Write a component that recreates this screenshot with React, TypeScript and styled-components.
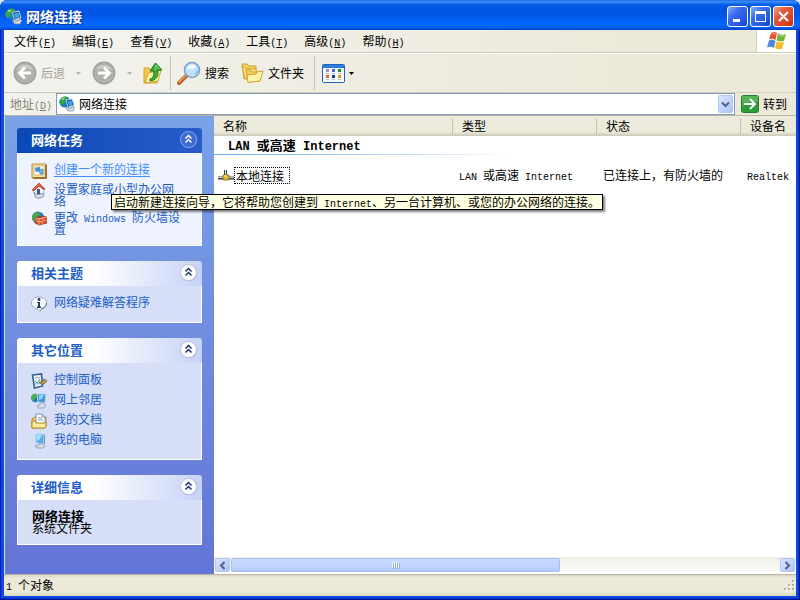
import React, { ReactNode } from "react";
import styled, { createGlobalStyle, css } from "styled-components";

const cjk = '"Noto Sans CJK SC", "Liberation Sans", sans-serif';

const GlobalStyle = createGlobalStyle`
  * { box-sizing: border-box; }
  html, body { margin: 0; background: #d5e3f5; }
  body, button, input { font: 12px/16px ${cjk}; color: #000; }
  button { padding: 0; border: 0; background: none; white-space: nowrap; }
  svg { display: block; flex: none; }
  ul { list-style: none; margin: 0; padding: 0; }
`;

const Latin = styled.span<{ $large?: boolean }>`
  font-family: "Liberation Mono", monospace;
  font-size: ${(p) => (p.$large ? 12 : 10)}px;
  line-height: 0;
  white-space: pre;
`;

/* ---------- window frame ---------- */

const Frame = styled.div`
  min-height: 100vh;
  display: flex;
  flex-direction: column;
  padding: 0 4px 4px;
  border-radius: 8px 8px 0 0;
  background: #0a4be0;
  box-shadow: inset 1px 0 #0019b8, inset -1px 0 #00138c, inset 0 -1px #00138c, inset -2px -2px #0431cb;
  overflow: hidden;
`;

const TitleBar = styled.header`
  display: flex;
  align-items: center;
  height: 30px;
  margin: 0 -4px;
  padding: 2px 6px 0 5px;
  background: linear-gradient(
    #0a5ae0 0, #3c8cf8 1px, #2a80f5 3px, #0660ea 4px, #0054e3 8px,
    #0055e6 15px, #0262f8 20px, #0468ff 26px, #005bea 28px, #003fc4 30px
  );
`;

const Title = styled.h1`
  flex: 1;
  margin: 0 0 0 4px;
  font-size: 14px;
  line-height: 20px;
  font-weight: 700;
  color: #fff;
  text-shadow: 1px 1px 1px #0a2a80;
`;

const Controls = styled.div`
  display: flex;
  gap: 2px;
`;

const ControlButton = styled.button<{ $close?: boolean }>`
  width: 21px;
  height: 21px;
  border: 1px solid #fff;
  border-radius: 3px;
  display: grid;
  place-items: center;
  background: ${(p) =>
    p.$close
      ? "linear-gradient(135deg, #f0a088, #e3593a 35%, #d8421f 75%, #b83010)"
      : "linear-gradient(135deg, #88aef8, #3c6cec 35%, #2457e0 75%, #1845c0)"};
`;

/* ---------- menu ---------- */

const MenuBar = styled.nav`
  display: flex;
  height: 23px;
  padding-left: 2px;
  background: linear-gradient(90deg, #f4f4f1, #ece9d8 80%);
  border-bottom: 1px solid #d0cdbd;
`;

const MenuItem = styled.button`
  padding: 0 8px;
`;

const Brand = styled.div`
  width: 40px;
  margin-left: auto;
  display: grid;
  place-items: center;
  background: #fff;
  border-left: 1px solid #d0cdbd;
`;

/* ---------- toolbar ---------- */

const ToolBar = styled.div`
  display: flex;
  align-items: center;
  height: 40px;
  padding: 0 9px;
  background: linear-gradient(90deg, #f2f2ee, #ece9d8 80%);
  border-top: 1px solid #fff;
  border-bottom: 1px solid #d0cdbd;
`;

const ToolButton = styled.button`
  display: flex;
  align-items: center;
  gap: 4px;
  &:disabled { color: #a5a295; }
`;

const ToolGroup = styled.div`
  display: flex;
  align-items: center;
  gap: 12px;
`;

const DropButton = styled.button`
  width: 27px;
  height: 24px;
  display: grid;
  place-items: center;
`;

const Divider = styled.span<{ $before: number; $after: number }>`
  width: 1px;
  height: 34px;
  margin: 0 ${(p) => p.$after}px 0 ${(p) => p.$before}px;
  background: #c9c6b6;
`;

/* ---------- address ---------- */

const AddressBar = styled.form`
  display: flex;
  align-items: center;
  height: 23px;
  background: linear-gradient(90deg, #f2f2ee, #ece9d8 80%);
  border-bottom: 1px solid #b8b5a5;
`;

const AddressLabel = styled.label`
  width: 52px;
  padding-left: 6px;
  color: #85836f;
  white-space: nowrap;
`;

const Field = styled.div`
  flex: 1;
  display: flex;
  align-items: center;
  align-self: stretch;
  min-width: 0;
  padding: 0 1px 0 2px;
  background: #fff;
  border: 1px solid #7f9db9;
`;

const AddressInput = styled.input`
  flex: 1;
  min-width: 0;
  border: 0;
  padding: 0 0 0 4px;
  outline: 0;
  background: none;
`;

const arrowButton = css`
  display: grid;
  place-items: center;
  border: 1px solid #b5c8f4;
  border-radius: 2px;
  background: linear-gradient(135deg, #dae5fe, #bacefb 70%, #a9c1f3);
`;

const FieldArrow = styled.button`
  ${arrowButton}
  width: 15px;
  height: 18px;
`;

const GoButton = styled.button`
  display: flex;
  align-items: center;
  gap: 4px;
  width: 61px;
  padding-left: 6px;
`;

/* ---------- side pane ---------- */

const Content = styled.div`
  flex: 1;
  display: flex;
  min-height: 0;
`;

const Side = styled.aside`
  width: 210px;
  flex: none;
  display: flex;
  flex-direction: column;
  gap: 15px;
  padding: 12px 12px 28px;
  border-left: 1px solid #d5e0fa;
  background: linear-gradient(#7ba2e7, #6375d6);
`;

const Panel = styled.section``;

const PanelHead = styled.div<{ $primary?: boolean }>`
  display: flex;
  align-items: center;
  justify-content: space-between;
  height: 25px;
  padding: 0 4px 2px 14px;
  border-radius: 3px 3px 0 0;
  color: ${(p) => (p.$primary ? "#fff" : "#215dc6")};
  background: ${(p) =>
    p.$primary
      ? "linear-gradient(90deg, #0a49b5, #2a5bcb)"
      : "linear-gradient(90deg, #fff 40%, #c6d3f7)"};
`;

const PanelTitle = styled.h2`
  margin: 0;
  font-size: 13px;
  line-height: 16px;
  font-weight: 700;
`;

const PanelBody = styled.div<{ $primary?: boolean }>`
  padding: 10px 12px 10px 13px;
  border: solid #fff;
  border-width: 0 1px 1px;
  background: ${(p) => (p.$primary ? "#eff3ff" : "#d6dff7")};
  line-height: 12px;
`;

const TaskList = styled.ul`
  display: flex;
  flex-direction: column;
  gap: 4px;
`;

const Task = styled.li`
  position: relative;
  display: flex;
  align-items: flex-start;
  gap: 7px;
  min-height: 16px;
`;

const TaskLink = styled.a<{ $hot?: boolean }>`
  width: 130px;
  color: ${(p) => (p.$hot ? "#428eff" : "#215dc6")};
  text-decoration: ${(p) => (p.$hot ? "underline" : "none")};
  text-underline-offset: 2px;
`;

const Tooltip = styled.div`
  position: absolute;
  z-index: 5;
  left: 80px;
  top: 31px;
  padding: 0 2px;
  border: 1px solid #000;
  background: #ffffe1;
  box-shadow: 2px 2px 2px rgba(0, 0, 0, 0.5);
  line-height: 14px;
  white-space: nowrap;
`;

const DetailName = styled.strong`
  display: block;
  margin-left: 1px;
  font-size: 13px;
`;

const DetailKind = styled.span`
  display: block;
  margin-left: 1px;
`;

/* ---------- list pane ---------- */

const Main = styled.main`
  flex: 1;
  min-width: 0;
  display: flex;
  flex-direction: column;
  background: #fff;
`;

const ListArea = styled.div`
  flex: 1;
  overflow: hidden;
`;

const Table = styled.table`
  width: 100%;
  table-layout: fixed;
  border-collapse: collapse;
  white-space: nowrap;
`;

const Column = styled.col<{ $width?: number }>`
  width: ${(p) => (p.$width ? `${p.$width}px` : "auto")};
`;

const HeadCell = styled.th`
  height: 20px;
  padding: 0;
  font-weight: 400;
  text-align: left;
  background: linear-gradient(#ebeadb 16px, #dcd9c8 18px, #cbc7b8);
`;

const HeadLabel = styled.span<{ $last?: boolean }>`
  display: block;
  padding-left: 9px;
  line-height: 16px;
  border-right: ${(p) => (p.$last ? "0" : "1px solid #c5c2b0")};
`;

const GroupCell = styled.th`
  height: 18px;
  padding: 0 0 0 14px;
  text-align: left;
  font-size: 13px;
  line-height: 16px;
  font-weight: 700;
`;

const GroupRule = styled.tr`
  height: 1px;
  background: linear-gradient(90deg, #70a5ee, #c4dcf6 200px, #fff 300px);
`;

const RuleCell = styled.td`
  padding: 0;
`;

const Cell = styled.td<{ $name?: boolean }>`
  height: 40px;
  padding: 0 0 0 ${(p) => (p.$name ? 4 : 6)}px;
`;

const FileName = styled.span`
  display: flex;
  align-items: center;
`;

const FocusBox = styled.span`
  padding: 0 5px 0 1px;
  border: 1px dotted #000;
  line-height: 15px;
`;

const ScrollBar = styled.div`
  display: flex;
  height: 17px;
  padding: 1px;
  background: linear-gradient(#eeede5, #fefefb);
  border-bottom: 1px solid #fff;
`;

const ScrollArrow = styled.button`
  ${arrowButton}
  width: 15px;
`;

const Track = styled.div`
  flex: 1;
  margin: 0 1px;
`;

const Thumb = styled.div`
  width: 60%;
  height: 100%;
  display: flex;
  align-items: center;
  justify-content: center;
  gap: 1px;
  border: 1px solid #a9bfee;
  border-radius: 2px;
  background: linear-gradient(#cbd9ff, #c3d3fd 60%, #b2c7f8);
`;

const Grip = styled.span`
  width: 1px;
  height: 6px;
  background: #eef4fe;
  box-shadow: 1px 1px #8cb0f8;
`;

const StatusBar = styled.footer`
  display: flex;
  align-items: center;
  justify-content: space-between;
  height: 22px;
  padding: 0 1px 0 2px;
  background: linear-gradient(#9a988a 0, #d8d5c5 1px, #ece9d8 4px, #ece9d8 18px, #d8d4c0);
`;

/* ---------- icons ---------- */

const NetIcon = ({ size = 16 }: { size?: number }) => (
  <svg width={size} height={size} viewBox="0 0 16 16">
    <circle cx="6" cy="6" r="5.6" fill="#2276c9" />
    <path d="M1 4C3 0 7 0 9 1L8 4 6 5 5 8 2 9 0 6Z" fill="#38a445" />
    <path d="M2 3Q4 1 6 2L4 4Z" fill="#9be08c" />
    <path d="M7 4l6-1 2 6-6 3z" fill="#1c5a94" stroke="#a8cbe6" />
    <path d="M8.500 5.500l4-1 1 4-3.500 1.500z" fill="#3aa6df" />
    <path d="M7 12l6-3 3 3-2 3H9z" fill="#d6dde6" stroke="#7689a2" strokeWidth=".7" />
    <path d="M9 13l5-2" stroke="#8494aa" />
  </svg>
);

const Flag = () => (
  <svg width="22" height="20" viewBox="0 0 22 20">
    <path d="M5 2q3-2 6 0L9.500 9q-3-2-6.500-.5z" fill="#e8552d" />
    <path d="M12 2.500q4 2 8 .5l-2 7q-4 1-7.500-.5z" fill="#74b73a" />
    <path d="M3 9.500q3-1.500 6.500.5L8 17q-3-2-7-.5z" fill="#4e86de" />
    <path d="M10.500 10.500q4 1.500 7.500.5l-2 7q-4 1-7-.8z" fill="#f5bd25" />
    <path d="M5.500 3q2-1 4 0M13 4q3 1.500 5 .7" stroke="#fff" strokeOpacity=".5" fill="none" />
  </svg>
);

const Round = ({ back }: { back?: boolean }) => (
  <svg width="24" height="24" viewBox="0 0 24 24">
    <circle cx="12" cy="12" r="10.800" fill="#b2b1ac" stroke="#9c9b97" strokeWidth="1.200" />
    <path d="M4 9a9 9 0 0 1 16 0q-8-4-16 0z" fill="#cfcecb" />
    <path
      d={back ? "M18 12H7M12 6.500L6.500 12l5.500 5.500" : "M6 12h11M12 6.500l5.500 5.500-5.500 5.500"}
      fill="none"
      stroke="#fff"
      strokeWidth="2.800"
    />
  </svg>
);

const Caret = ({ color = "#000" }: { color?: string }) => (
  <svg width="5" height="3" viewBox="0 0 5 3"><path d="M0 0h5L2.500 3z" fill={color} /></svg>
);

const UpFolder = () => (
  <svg width="20" height="24" viewBox="0 0 20 24">
    <path d="M1 7h5l2 2h6v13L1 22z" fill="#f0c94e" stroke="#cfa22a" />
    <path d="M2 22L5 12l13-3-3 11z" fill="#fdf0a0" stroke="#cfa22a" />
    <path d="M7 18q4 0 4-8H7l5.500-8L19 9h-4q1 10-8 11z" fill="#3cab37" stroke="#1d7a22" />
    <path d="M12 9q1-3 1-5l3 4" stroke="#8fe07f" fill="none" />
  </svg>
);

const SearchIcon = () => (
  <svg width="24" height="24" viewBox="0 0 24 24">
    <path d="M2 22l8-8" stroke="#b9622a" strokeWidth="4" strokeLinecap="round" />
    <path d="M2 21l7-7" stroke="#efa368" strokeWidth="1.500" strokeLinecap="round" />
    <circle cx="15" cy="9" r="7.500" fill="#bfe1fb" stroke="#7d9fcb" strokeWidth="1.600" />
    <path d="M10 8a5.500 5.500 0 0 1 9-3q-2 4-9 3z" fill="#f1faff" />
    <path d="M18 13q2-1 3-4" stroke="#84bcf0" strokeWidth="1.500" fill="none" />
  </svg>
);

const FoldersIcon = () => (
  <svg width="23" height="22" viewBox="0 0 23 22">
    <path d="M1 2h5l2 2h7v11L3 17z" fill="#f4cf5b" stroke="#cfa32e" />
    <path d="M1 4l3 13 12-2-1-8H5z" fill="#fbe48a" stroke="#cfa32e" />
    <path d="M5 8h4l2 2h8v9L7 20z" fill="#f4cf5b" stroke="#cfa32e" />
    <path d="M7 20.500L6 13l9-1 1-2 6-1-3 10z" fill="#fff3a8" stroke="#cfa32e" />
  </svg>
);

const dots = ["#a98ab8", "#3a6ac4", "#1c8a2c", "#df7138", "#173b7c", "#cf9a1e"];

const ViewsIcon = () => (
  <svg width="23" height="19" viewBox="0 0 23 19">
    <rect x=".5" y=".5" width="22" height="18" rx="1" fill="#f7f9fc" stroke="#1c64bd" />
    <path d="M1 1h21v3H1z" fill="#2a7ce0" />
    {dots.map((fill, i) => (
      <g key={fill}>
        <rect x={4 + (i % 3) * 6} y={5 + Math.floor(i / 3) * 6} width="3" height="3" fill={fill} />
        <rect x={4 + (i % 3) * 6} y={9 + Math.floor(i / 3) * 6} width="3" height="1" fill="#bac2cf" />
      </g>
    ))}
  </svg>
);

const GoIcon = () => (
  <svg width="18" height="18" viewBox="0 0 18 18">
    <rect x=".5" y=".5" width="17" height="17" rx="2" fill="#2e9a38" stroke="#237b2c" />
    <path d="M1 1h16v6Q8 5 1 12z" fill="#6fc46c" fillOpacity=".6" />
    <path d="M3 9h11M9 4l5 5-5 5" stroke="#fff" strokeWidth="2" fill="none" />
  </svg>
);

const Chevron = ({ dir }: { dir: "left" | "right" | "down" }) => (
  <svg width="9" height="9" viewBox="0 0 9 9">
    <path
      d={{ left: "M6.500 1L3 4.500 6.500 8", right: "M2.500 1L6 4.500 2.500 8", down: "M1 2.500L4.500 6 8 2.500" }[dir]}
      fill="none"
      stroke="#4d6185"
      strokeWidth="2"
    />
  </svg>
);

const CollapseIcon = ({ primary }: { primary?: boolean }) => (
  <svg width="19" height="19" viewBox="0 0 19 19">
    <circle cx="10" cy="10" r="8.500" fill="#7a8fc9" fillOpacity=".4" />
    <circle cx="9.500" cy="9.500" r="8" fill={primary ? "#3b6bd0" : "#fff"} stroke={primary ? "#86a7e8" : "#b9c4e2"} />
    <path d="M6.500 8.500l3-3 3 3M6.500 12.500l3-3 3 3" fill="none" stroke={primary ? "#fff" : "#1c3477"} strokeWidth="1.500" />
  </svg>
);

const NewConnIcon = () => (
  <svg width="16" height="16" viewBox="0 0 16 16">
    <path d="M1 1h14v14H1z" fill="#f3e2ac" stroke="#b98a33" />
    <path d="M15 2v13H2" stroke="#8a5c18" strokeWidth="1.500" fill="none" />
    <path d="M3 3h10v9H3z" fill="#fff" stroke="#dabb75" />
    <path d="M4 5l5-1v4L5 9z" fill="#3a8edb" stroke="#6f9fc9" strokeWidth=".6" />
    <path d="M8 7l4-1v5L9 11z" fill="#65baf0" stroke="#3b6fa8" strokeWidth=".6" />
  </svg>
);

const HomeNetIcon = () => (
  <svg width="16" height="16" viewBox="0 0 16 16">
    <path d="M3 6l5-4 5 4v5H3z" fill="#f5f5f8" stroke="#9da8b8" strokeWidth=".7" />
    <path d="M1 7l7-7 6 6-1 1-5-4-5 5z" fill="#e05a35" stroke="#9c3418" strokeWidth=".6" />
    <path d="M6 6h3v5H6z" fill="#315c91" />
    <path d="M3 9l3 3 6-2 1 3q-5 4-9 1z" fill="#b9c4d1" stroke="#6e7e92" strokeWidth=".6" />
    <path d="M5 13q4 1 7-1" stroke="#fff" fill="none" />
  </svg>
);

const FirewallIcon = () => (
  <svg width="16" height="16" viewBox="0 0 16 16">
    <circle cx="7" cy="6.500" r="6" fill="#2c78c4" />
    <path d="M1 6q1-5 7-5l1 3-4 2-1 4-2 0z" fill="#46a848" />
    <path d="M4 7l8-2 4 1v6l-8 2-4-2z" fill="#d7532c" stroke="#8e2d12" strokeWidth=".7" />
    <path d="M8 8v6M4 9l4 2 8-2M12 6v3M11 10v3" stroke="#f6b08c" strokeWidth=".8" fill="none" />
    <path d="M4 7l4 1 8-2" stroke="#ffc39e" strokeWidth=".8" fill="none" />
  </svg>
);

const InfoIcon = () => (
  <svg width="16" height="16" viewBox="0 0 16 16">
    <path d="M8 1c4.500 0 7.500 2.500 7.500 6 0 3-2 5-5 5.500L9 15.500 6.500 13C3 12.500.500 10 .500 7 .500 3.500 3.500 1 8 1z" fill="#f8faff" stroke="#9aa9bf" />
    <path d="M10 13q5-1 5.500-6" stroke="#61708a" fill="none" />
    <circle cx="8" cy="3.500" r="1.400" fill="#173b7c" />
    <path d="M6 6h3v4.500h1V12H6v-1.500h1V7H6z" fill="#173b7c" />
  </svg>
);

const ControlPanelIcon = () => (
  <svg width="16" height="16" viewBox="0 0 16 16">
    <path d="M1.500 2l9-1 1 12-8 2z" fill="#e9f3fd" stroke="#33608f" strokeWidth="1.600" />
    <path d="M4 5l5-.5M4 11l5-.5" stroke="#8cb0d4" />
    <path d="M4 8l2 2 3-4" stroke="#4aa34a" fill="none" />
    <path d="M8 9h3l2-3 3 2-3 3h-3z" fill="#c8a03c" stroke="#4b5260" strokeWidth=".7" />
  </svg>
);

const NeighborsIcon = () => (
  <svg width="16" height="16" viewBox="0 0 16 16">
    <circle cx="4.500" cy="5" r="4.300" fill="#2378bd" />
    <path d="M0 4q2-4 6-3l-1 4-3 3z" fill="#46b250" />
    <path d="M6 1h9l-1 9-7-1z" fill="#3b94d8" stroke="#bfdcf1" />
    <path d="M8 2h5l-2 4-3 1z" fill="#8dd5f7" />
    <path d="M9 10h4v2l2 1-2 2H7l-1-2 3-1z" fill="#dae0ec" stroke="#8090aa" strokeWidth=".7" />
  </svg>
);

const DocumentsIcon = () => (
  <svg width="16" height="16" viewBox="0 0 16 16">
    <path d="M1 6l3-2h11v10l-2 1H1z" fill="#f2d166" stroke="#af8a22" />
    <path d="M5 1h6l3 3v7H5z" fill="#fff" stroke="#8497ae" />
    <path d="M11 1v3h3M7 5h4M7 7h5" stroke="#8497ae" fill="none" />
    <path d="M1 8h3l1 2h9l1-1v5l-2 1H1z" fill="#fbe99c" stroke="#af8a22" />
  </svg>
);

const ComputerIcon = () => (
  <svg width="16" height="16" viewBox="0 0 16 16">
    <path d="M4 1l9 0v10l-8-1z" fill="#55b0e9" stroke="#c7deef" />
    <path d="M5 2h6L8 7 6 8z" fill="#a9e2fb" />
    <path d="M13 1l1 1v9l-1 0z" fill="#7893b5" />
    <path d="M8 11h4v1l2 1-2 2H6l-2-2 4-1z" fill="#dbe1ec" stroke="#7f8da8" strokeWidth=".8" />
  </svg>
);

const LanIcon = () => (
  <svg width="16" height="16" viewBox="0 0 16 16">
    <path d="M7.500 3v6" stroke="#3f4650" strokeWidth="3" />
    <path d="M7.500 3v6" stroke="#d5d9de" />
    <path d="M0 11h16" stroke="#3f4650" strokeWidth="3" />
    <path d="M0 10.500h16" stroke="#c9ced4" />
    <path d="M5 8h6v5H5z" fill="#e1b436" stroke="#8a6410" strokeWidth=".8" />
    <path d="M6 9h3" stroke="#fff0a0" />
  </svg>
);

const SizeGrip = () => (
  <svg width="12" height="12" viewBox="0 0 12 12">
    {[[9, 1], [5, 5], [9, 5], [1, 9], [5, 9], [9, 9]].map(([x, y]) => (
      <g key={`${x}-${y}`}>
        <rect x={x + 1} y={y + 1} width="2" height="2" fill="#fff" />
        <rect x={x} y={y} width="2" height="2" fill="#b4b09c" />
      </g>
    ))}
  </svg>
);

/* ---------- data ---------- */

const menus: [string, string][] = [
  ["文件", "F"], ["编辑", "E"], ["查看", "V"], ["收藏", "A"],
  ["工具", "T"], ["高级", "N"], ["帮助", "H"],
];

const places: [string, ReactNode][] = [
  ["控制面板", <ControlPanelIcon />],
  ["网上邻居", <NeighborsIcon />],
  ["我的文档", <DocumentsIcon />],
  ["我的电脑", <ComputerIcon />],
];

const Key = ({ letter }: { letter: string }) => (
  <Latin>(<u>{letter}</u>)</Latin>
);

type SidePanelProps = { title: string; primary?: boolean; children: ReactNode };

const SidePanel = ({ title, primary, children }: SidePanelProps) => (
  <Panel>
    <PanelHead $primary={primary}>
      <PanelTitle>{title}</PanelTitle>
      <button type="button" aria-label={`折叠${title}`}><CollapseIcon primary={primary} /></button>
    </PanelHead>
    <PanelBody $primary={primary}>{children}</PanelBody>
  </Panel>
);

export default function App() {
  return (
    <Frame>
      <GlobalStyle />
      <TitleBar>
        <NetIcon size={17} />
        <Title>网络连接</Title>
        <Controls>
          <ControlButton aria-label="最小化">
            <svg width="15" height="15"><path d="M3 10h7v3H3z" fill="#fff" /></svg>
          </ControlButton>
          <ControlButton aria-label="最大化">
            <svg width="15" height="15">
              <path d="M2.500 2.500h10v10h-10z" fill="none" stroke="#fff" />
              <path d="M2 2h11v3H2z" fill="#fff" />
            </svg>
          </ControlButton>
          <ControlButton $close aria-label="关闭">
            <svg width="15" height="15"><path d="M3 3l9 9M12 3l-9 9" stroke="#fff" strokeWidth="2.200" /></svg>
          </ControlButton>
        </Controls>
      </TitleBar>

      <MenuBar>
        {menus.map(([label, letter]) => (
          <MenuItem key={letter} type="button">{label}<Key letter={letter} /></MenuItem>
        ))}
        <Brand><Flag /></Brand>
      </MenuBar>

      <ToolBar>
        <ToolButton disabled><Round back />后退</ToolButton>
        <DropButton disabled aria-label="后退历史"><Caret color="#b9b6a8" /></DropButton>
        <ToolButton disabled aria-label="前进"><Round /></ToolButton>
        <DropButton disabled aria-label="前进历史"><Caret color="#b9b6a8" /></DropButton>
        <ToolButton aria-label="向上"><UpFolder /></ToolButton>
        <Divider $before={7} $after={6} />
        <ToolGroup>
          <ToolButton><SearchIcon />搜索</ToolButton>
          <ToolButton><FoldersIcon />文件夹</ToolButton>
        </ToolGroup>
        <Divider $before={10} $after={7} />
        <ToolButton aria-label="查看方式"><ViewsIcon /><Caret /></ToolButton>
      </ToolBar>

      <AddressBar onSubmit={(e) => e.preventDefault()}>
        <AddressLabel htmlFor="address">地址<Key letter="D" /></AddressLabel>
        <Field>
          <NetIcon size={16} />
          <AddressInput id="address" defaultValue="网络连接" />
          <FieldArrow type="button" aria-label="展开地址"><Chevron dir="down" /></FieldArrow>
        </Field>
        <GoButton type="submit"><GoIcon />转到</GoButton>
      </AddressBar>

      <Content>
        <Side>
          <SidePanel title="网络任务" primary>
            <TaskList>
              <Task>
                <NewConnIcon />
                <TaskLink href="#new" $hot aria-describedby="tip">创建一个新的连接</TaskLink>
                <Tooltip role="tooltip" id="tip">
                  启动新建连接向导，它将帮助您创建到<Latin> Internet</Latin>、另一台计算机、或您的办公网络的连接。
                </Tooltip>
              </Task>
              <Task>
                <HomeNetIcon />
                <TaskLink href="#home">设置家庭或小型办公网络</TaskLink>
              </Task>
              <Task>
                <FirewallIcon />
                <TaskLink href="#firewall">更改<Latin> Windows </Latin>防火墙设置</TaskLink>
              </Task>
            </TaskList>
          </SidePanel>
          <SidePanel title="相关主题">
            <TaskList>
              <Task><InfoIcon /><TaskLink href="#help">网络疑难解答程序</TaskLink></Task>
            </TaskList>
          </SidePanel>
          <SidePanel title="其它位置">
            <TaskList>
              {places.map(([name, icon]) => (
                <Task key={name}>{icon}<TaskLink href="#place">{name}</TaskLink></Task>
              ))}
            </TaskList>
          </SidePanel>
          <SidePanel title="详细信息">
            <DetailName>网络连接</DetailName>
            <DetailKind>系统文件夹</DetailKind>
          </SidePanel>
        </Side>

        <Main>
          <ListArea>
            <Table>
              <colgroup>
                <Column $width={239} />
                <Column $width={144} />
                <Column $width={144} />
                <Column />
              </colgroup>
              <thead>
                <tr>
                  <HeadCell scope="col"><HeadLabel>名称</HeadLabel></HeadCell>
                  <HeadCell scope="col"><HeadLabel>类型</HeadLabel></HeadCell>
                  <HeadCell scope="col"><HeadLabel>状态</HeadLabel></HeadCell>
                  <HeadCell scope="col"><HeadLabel $last>设备名</HeadLabel></HeadCell>
                </tr>
              </thead>
              <tbody>
                <tr>
                  <GroupCell colSpan={4} scope="rowgroup">
                    <Latin $large>LAN </Latin>或高速<Latin $large> Internet</Latin>
                  </GroupCell>
                </tr>
                <GroupRule><RuleCell colSpan={4} /></GroupRule>
                <tr>
                  <Cell $name><FileName><LanIcon /><FocusBox>本地连接</FocusBox></FileName></Cell>
                  <Cell><Latin>LAN </Latin>或高速<Latin> Internet</Latin></Cell>
                  <Cell>已连接上，有防火墙的</Cell>
                  <Cell><Latin>Realtek</Latin></Cell>
                </tr>
              </tbody>
            </Table>
          </ListArea>
          <ScrollBar>
            <ScrollArrow type="button" aria-label="向左滚动"><Chevron dir="left" /></ScrollArrow>
            <Track>
              <Thumb><Grip /><Grip /><Grip /><Grip /></Thumb>
            </Track>
            <ScrollArrow type="button" aria-label="向右滚动"><Chevron dir="right" /></ScrollArrow>
          </ScrollBar>
        </Main>
      </Content>

      <StatusBar>
        <span><Latin>1 </Latin>个对象</span>
        <SizeGrip />
      </StatusBar>
    </Frame>
  );
}
